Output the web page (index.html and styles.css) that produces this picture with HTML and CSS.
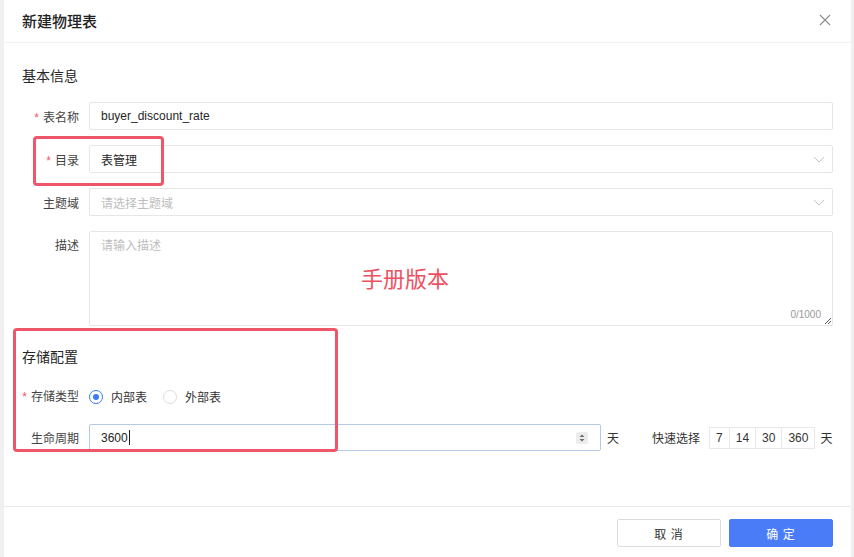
FILE: index.html
```html
<!DOCTYPE html>
<html lang="zh">
<head>
<meta charset="utf-8">
<title>新建物理表</title>
<link rel="stylesheet" href="styles.css">
</head>
<body>
<div class="dialog">
  <div class="header">
    <div class="title">新建物理表</div>
    <svg class="close" width="12" height="12" viewBox="0 0 12 12"><path d="M1 1L11 11M11 1L1 11" stroke="#8c8c8c" stroke-width="1.1" fill="none"/></svg>
  </div>
  <div class="content">
    <div class="section-title first">基本信息</div>
    <div class="row">
      <div class="label"><span class="req">*</span>表名称</div>
      <div class="input"><span class="val">buyer_discount_rate</span></div>
    </div>
    <div class="row">
      <div class="label"><span class="req">*</span>目录</div>
      <div class="input select"><span class="val">表管理</span><svg class="arrow" width="12" height="7" viewBox="0 0 12 7"><path d="M1 1L6 6L11 1" stroke="#c4c4c4" stroke-width="1" fill="none"/></svg></div>
    </div>
    <div class="row">
      <div class="label">主题域</div>
      <div class="input select"><span class="ph">请选择主题域</span><svg class="arrow" width="12" height="7" viewBox="0 0 12 7"><path d="M1 1L6 6L11 1" stroke="#c4c4c4" stroke-width="1" fill="none"/></svg></div>
    </div>
    <div class="row top">
      <div class="label">描述</div>
      <div class="input textarea"><span class="ph">请输入描述</span><span class="count">0/1000</span><svg class="resize" width="7" height="7" viewBox="0 0 7 7"><path d="M1 7L7 1M4 7L7 4" stroke="#555" stroke-width="1" fill="none"/></svg></div>
    </div>
    <div class="section-title second">存储配置</div>
    <div class="row radio-row">
      <div class="label"><span class="req">*</span>存储类型</div>
      <div class="radios">
        <span class="radio checked"></span><span class="rtext">内部表</span>
        <span class="radio"></span><span class="rtext">外部表</span>
      </div>
    </div>
    <div class="row life">
      <div class="label">生命周期</div>
      <div class="input num"><span class="val">3600<span class="caret"></span></span>
        <svg class="spin" width="12" height="12" viewBox="0 0 12 12"><rect x="0" y="0" width="12" height="12" rx="2" fill="#ececec"/><path d="M3.5 5L6 2.5L8.5 5Z M3.5 7L6 9.5L8.5 7Z" fill="#6b6b6b"/></svg>
      </div>
      <span class="unit">天</span>
      <span class="quick">快速选择</span>
      <div class="qgroup"><span class="qbtn">7</span><span class="qbtn">14</span><span class="qbtn">30</span><span class="qbtn">360</span></div>
      <span class="unit2">天</span>
    </div>
  </div>
  <div class="footer">
    <button class="btn cancel">取 消</button>
    <button class="btn ok">确 定</button>
  </div>
  <div class="mark mark1"></div>
  <div class="mark mark2"></div>
  <div class="note">手册版本</div>
</div>
</body>
</html>
```

FILE: styles.css
```css
* { box-sizing: border-box; }
html, body { margin: 0; padding: 0; }
body {
  background: #f0f0f0;
  font-family: "Liberation Sans", "Noto Sans CJK SC", sans-serif;
  color: #333;
  font-size: 12px;
  width: 854px;
  height: 557px;
  overflow: hidden;
}
.dialog {
  position: relative;
  margin-left: 4px;
  width: 847px;
  height: 557px;
  background: #fff;
  display: flex;
  flex-direction: column;
}
.header {
  height: 43px;
  border-bottom: 1px solid #f3f3f3;
  display: flex;
  align-items: center;
  justify-content: space-between;
  padding: 0 20px 2px 18px;
}
.title {
  font-family: "Noto Sans CJK SC", sans-serif;
  font-size: 15px;
  font-weight: 500;
  color: #222;
}
.close { display: block; }
.content {
  flex: 1;
  padding: 0 18px;
}
.section-title {
  font-family: "Noto Sans CJK SC", sans-serif;
  font-size: 14px;
  line-height: 20px;
  color: #262626;
}
.section-title.first { margin-top: 22px; margin-bottom: 17px; }
.section-title.second { margin-top: 20px; margin-bottom: 20px; }
.row {
  display: flex;
  align-items: center;
  margin-bottom: 15px;
}
.row.top { align-items: flex-start; }
.label {
  width: 57px;
  flex: none;
  text-align: right;
  margin-right: 10px;
  font-family: "Noto Sans CJK SC", sans-serif;
  font-size: 12px;
  color: #444;
  white-space: nowrap;
}
.row.top .label { padding-top: 5px; }
.req { color: #f0566a; margin-right: 4px; font-family: "Liberation Sans", sans-serif; }
.input {
  position: relative;
  flex: none;
  width: 744px;
  height: 28px;
  border: 1px solid #e6e6e6;
  border-radius: 2px;
  display: flex;
  align-items: center;
  padding: 0 11px;
  font-size: 12px;
}
.val { color: #262626; font-family: "Liberation Sans", "Noto Sans CJK SC", sans-serif; }
.ph { color: #bdbdbd; font-family: "Noto Sans CJK SC", sans-serif; }
.select { justify-content: space-between; padding-right: 7px; }
.select .val { font-family: "Noto Sans CJK SC", sans-serif; }
.arrow { display: block; }
.textarea {
  height: 95px;
  align-items: flex-start;
  padding-top: 4px;
}
.count {
  position: absolute;
  right: 11px;
  bottom: 5px;
  color: #999;
  font-size: 10px;
}
.resize { position: absolute; right: 1px; bottom: 1px; }
.radio-row { margin-bottom: 17px; line-height: 20px; }
.radios { display: flex; align-items: center; }
.radio {
  width: 14px;
  height: 14px;
  border-radius: 50%;
  border: 1px solid #dcdcdc;
  background: #fff;
  margin-right: 8px;
  position: relative;
}
.radio.checked { border-color: #3b7cf5; }
.radio.checked::after {
  content: "";
  position: absolute;
  left: 3px; top: 3px;
  width: 6px; height: 6px;
  border-radius: 50%;
  background: #3b7cf5;
}
.rtext {
  font-family: "Noto Sans CJK SC", sans-serif;
  font-size: 12px;
  color: #333;
  margin-right: 16px;
}
.life { margin-bottom: 0; white-space: nowrap; }
.num {
  width: 512px;
  height: 27px;
  border-color: #b7c8e6;
  justify-content: space-between;
  padding-right: 12px;
}
.caret {
  display: inline-block;
  width: 1px;
  height: 15px;
  background: #222;
  vertical-align: -3px;
  margin-left: 1px;
}
.spin { display: block; }
.unit { flex: none; margin-left: 6px; font-family: "Noto Sans CJK SC", sans-serif; }
.quick { flex: none; margin-left: 33px; margin-right: 9px; font-family: "Noto Sans CJK SC", sans-serif; }
.qgroup { display: flex; flex: none; }
.qbtn {
  height: 22px;
  line-height: 20px;
  border: 1px solid #e8e8e8;
  margin-left: -1px;
  padding: 0 6px;
  font-size: 12px;
  color: #333;
  background: #fff;
}
.qgroup .qbtn:first-child { margin-left: 0; }
.unit2 { flex: none; margin-left: 5px; font-family: "Noto Sans CJK SC", sans-serif; }
.footer {
  height: 51px;
  border-top: 1px solid #e8e8e8;
  display: flex;
  justify-content: flex-end;
  align-items: flex-start;
  padding: 12px 18px 0 0;
}
.btn {
  width: 104px;
  height: 28px;
  border-radius: 2px;
  font-family: "Noto Sans CJK SC", sans-serif;
  font-size: 12px;
  letter-spacing: 1px;
  cursor: pointer;
  padding: 0;
}
.cancel { background: #fff; border: 1px solid #dcdcdc; color: #333; margin-right: 8px; }
.ok { background: #497cf6; border: 1px solid #497cf6; color: #fff; }
.mark {
  position: absolute;
  border: 3px solid #f0566a;
  border-radius: 4px;
  pointer-events: none;
}
.mark1 { left: 29px; top: 136px; width: 131px; height: 50px; }
.mark2 { left: 9px; top: 328px; width: 325px; height: 124px; }
.note {
  position: absolute;
  left: 357px;
  top: 263px;
  font-family: "Noto Sans CJK SC", sans-serif;
  font-size: 22px;
  color: #ec5163;
  line-height: 28px;
}
```
